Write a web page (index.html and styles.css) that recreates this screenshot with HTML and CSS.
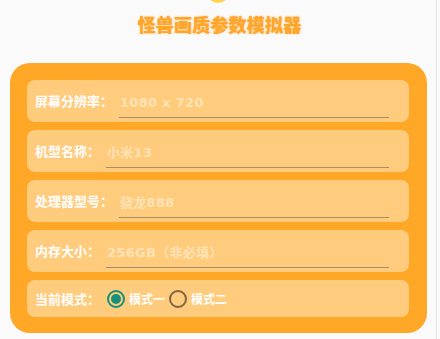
FILE: index.html
```html
<!DOCTYPE html>
<html lang="zh">
<head>
<meta charset="utf-8">
<link rel="stylesheet" href="styles.css">
</head>
<body>
<div class="page">
  <div class="logo-peek"><div class="logo"></div></div>
  <h1 class="title">怪兽画质参数模拟器</h1>
  <div class="card">
    <div class="row">
      <span class="label">屏幕分辨率：</span>
      <input class="field" type="text" placeholder="1080 x 720">
    </div>
    <div class="row">
      <span class="label">机型名称：</span>
      <input class="field" type="text" placeholder="小米13">
    </div>
    <div class="row">
      <span class="label">处理器型号：</span>
      <input class="field" type="text" placeholder="骁龙888">
    </div>
    <div class="row">
      <span class="label">内存大小：</span>
      <input class="field" type="text" placeholder="256GB（非必填）">
    </div>
    <div class="row row-mode">
      <span class="label">当前模式：</span>
      <span class="radio checked"></span><span class="opt">模式一</span>
      <span class="radio"></span><span class="opt">模式二</span>
    </div>
  </div>
</div>
</body>
</html>
```
FILE: styles.css
```css
html, body {
  margin: 0;
  padding: 0;
  background: #fafafa;
}
body {
  font-family: "Noto Sans CJK SC", "Noto Sans", sans-serif;
}
.page {
  width: 437px;
  height: 339px;
  border-right: 1px solid #e4e4e4;
  box-sizing: border-box;
  overflow: hidden;
}
.logo-peek {
  height: 3px;
  overflow: hidden;
  display: flex;
  justify-content: center;
}
.logo {
  width: 22px;
  height: 22px;
  border-radius: 50%;
  margin-top: -19px;
  background: radial-gradient(circle at 50% 80%, #ffd54f 0%, #ffcf4a 60%, #ffe9a8 100%);
}
.title {
  margin: 9px 0 0 0;
  height: 24px;
  line-height: 24px;
  font-size: 18px;
  font-weight: 900;
  text-align: center;
  color: #ffa52a;
  letter-spacing: 0.2px;
  padding-left: 3px;
  text-shadow: 0 0 2px rgba(255, 165, 42, 0.7);
}
.card {
  margin: 27px 0 0 10px;
  width: 417px;
  box-sizing: border-box;
  background: #ffa726;
  border-radius: 20px;
  padding: 17px 18px 16px 17px;
  display: flex;
  flex-direction: column;
  gap: 8px;
}
.row {
  height: 42px;
  background: #ffcb7d;
  border-radius: 8px;
  display: flex;
  align-items: center;
  padding: 0 20px 0 8px;
  box-sizing: border-box;
}
.row-mode {
  height: 37px;
}
.label {
  color: #ffffff;
  font-size: 13px;
  font-weight: 700;
  line-height: 20px;
  white-space: nowrap;
  margin-right: 6px;
}
.field {
  flex: 1;
  min-width: 0;
  height: 27px;
  margin-top: 7px;
  padding: 0 0 4px 1px;
  box-sizing: border-box;
  border: none;
  border-bottom: 1px solid #a98c69;
  background: transparent;
  outline: none;
  font-family: "DejaVu Sans", "Noto Sans CJK SC", sans-serif;
  font-size: 13px;
  font-weight: 700;
  letter-spacing: 0.3px;
  color: #fff;
}
.field::placeholder {
  color: #ffe3b6;
  opacity: 1;
}
.radio {
  width: 18px;
  height: 18px;
  box-sizing: border-box;
  border-radius: 50%;
  border: 2px solid #806544;
  margin: 0 4px 0 1px;
  display: flex;
  align-items: center;
  justify-content: center;
}
.radio.checked {
  border-color: #16907a;
}
.radio.checked::after {
  content: "";
  width: 10px;
  height: 10px;
  border-radius: 50%;
  background: #16907a;
}
.opt {
  color: #ffffff;
  font-size: 12px;
  font-weight: 700;
  margin-right: 3px;
}
```
